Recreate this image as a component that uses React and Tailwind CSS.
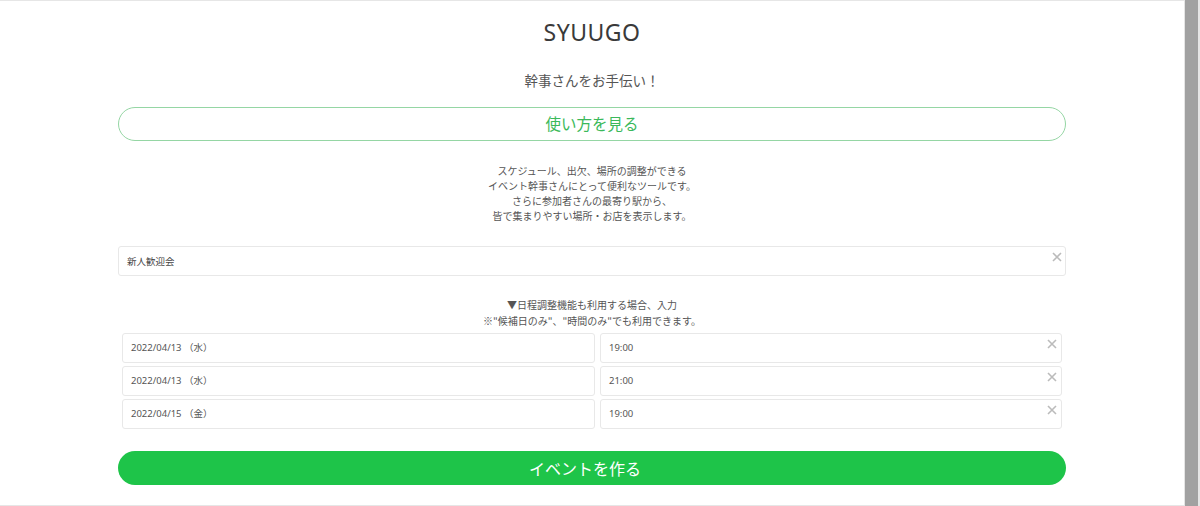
import React from "react";

const rows = [
  { date: "2022/04/13 （水）", time: "19:00" },
  { date: "2022/04/13 （水）", time: "21:00" },
  { date: "2022/04/15 （金）", time: "19:00" },
];

const jp = { fontFamily: '"Noto Sans CJK JP", "Noto Sans", sans-serif' };
const num = { fontFamily: '"Noto Sans", "Noto Sans CJK JP", sans-serif' };

function Clear({ className }) {
  return (
    <span className={"absolute text-[#bbbbbb] leading-none " + className}>
      <svg width="10" height="10" viewBox="0 0 10 10">
        <path d="M1 1L9 9M9 1L1 9" stroke="currentColor" strokeWidth="1.6" />
      </svg>
    </span>
  );
}

export default function App() {
  return (
    <div className="grid h-[506px] w-[1200px] grid-cols-[1184px_16px] bg-white" style={jp}>
      <main className="border-t border-b border-[#e6e6e6]">
        <div className="mx-auto w-[948px] flex flex-col items-stretch">
          <h1
            className="mt-[16px] h-[30px] text-center text-[23px] leading-[30px] tracking-[0.5px] text-[#3a3a3a]"
            style={{ fontFamily: '"Noto Sans", sans-serif' }}
          >
            SYUUGO
          </h1>
          <p className="mt-[23px] text-center text-[13.5px] leading-[20px] text-[#555555]">
            幹事さんをお手伝い！
          </p>
          <button className="mt-[17px] h-[34px] rounded-full border border-[#95d6a4] text-[15.5px] text-[#3bb95a]">
            使い方を見る
          </button>
          <div className="mt-[22px] text-center text-[10px] leading-[15px] text-[#555555]">
            <p>スケジュール、出欠、場所の調整ができる</p>
            <p>イベント幹事さんにとって便利なツールです。</p>
            <p>さらに参加者さんの最寄り駅から、</p>
            <p>皆で集まりやすい場所・お店を表示します。</p>
          </div>
          <div className="relative mt-[23px] h-[30px] rounded-[3px] border border-[#e8e8e8] px-[8px] text-[9.5px] leading-[28px] text-[#444444]">
            新人歓迎会
            <Clear className="right-[3px] top-[5px]" />
          </div>
          <div className="mt-[21px] text-center text-[10px] leading-[16px] text-[#555555]">
            <p>▼日程調整機能も利用する場合、入力</p>
            <p>※"候補日のみ"、"時間のみ"でも利用できます。</p>
          </div>
          <div className="mt-[4px] flex flex-col gap-[3px] px-[4px]">
            {rows.map((r, i) => (
              <div key={i} className="flex gap-[5px]">
                <div
                  className="h-[30px] w-[473px] rounded-[3px] border border-[#e8e8e8] px-[8px] text-[9.5px] leading-[28px] text-[#555555]"
                  style={num}
                >
                  {r.date}
                </div>
                <div
                  className="relative h-[30px] flex-1 rounded-[3px] border border-[#e8e8e8] px-[8px] text-[9.5px] leading-[28px] text-[#555555]"
                  style={num}
                >
                  {r.time}
                  <Clear className="right-[4px] top-[5px]" />
                </div>
              </div>
            ))}
          </div>
          <button className="mt-[22px] h-[34px] rounded-full bg-[#1ec449] pr-[14px] text-[16px] text-white">
            イベントを作る
          </button>
        </div>
      </main>
      <aside className="flex bg-neutral-100">
        <span className="block w-[1px] bg-neutral-200" />
        <span className="block w-[13px] bg-neutral-400" />
        <span className="block w-[2px] bg-neutral-200" />
      </aside>
    </div>
  );
}
